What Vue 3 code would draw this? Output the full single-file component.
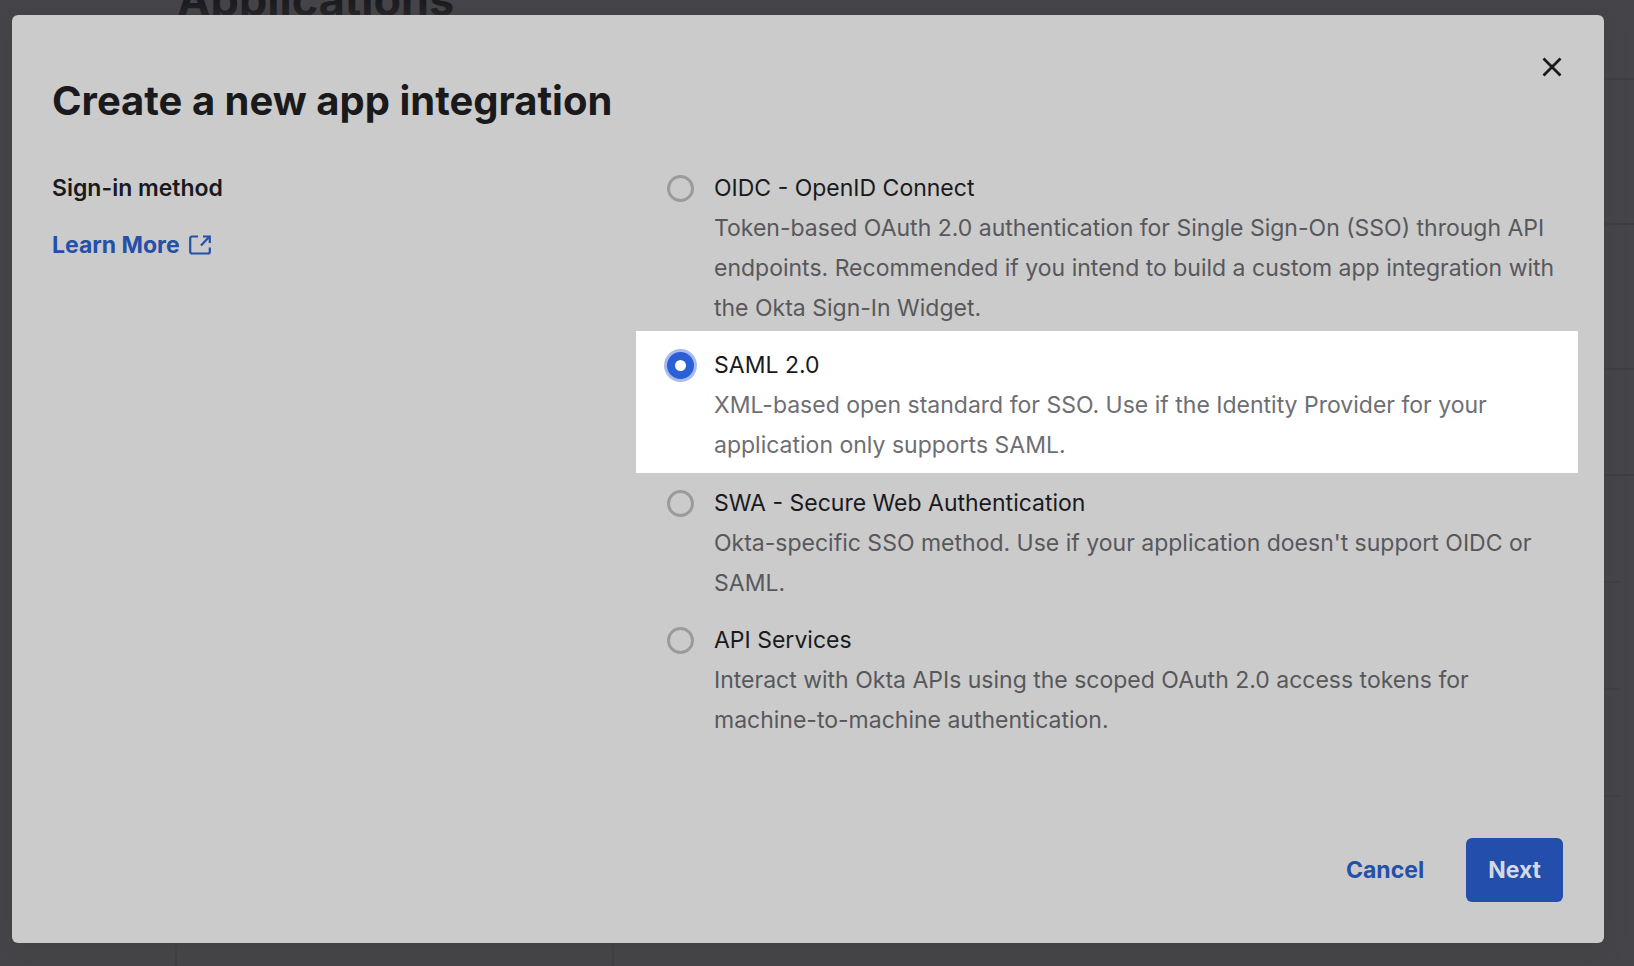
<script setup>
import { ref } from 'vue'

const selected = ref('saml')

const methods = [
  {
    id: 'oidc',
    title: 'OIDC - OpenID Connect',
    text: 'Token-based OAuth 2.0 authentication for Single Sign-On (SSO) through API endpoints. Recommended if you intend to build a custom app integration with the Okta Sign-In Widget.',
  },
  {
    id: 'saml',
    title: 'SAML 2.0',
    text: 'XML-based open standard for SSO. Use if the Identity Provider for your application only supports SAML.',
  },
  {
    id: 'swa',
    title: 'SWA - Secure Web Authentication',
    text: "Okta-specific SSO method. Use if your application doesn't support OIDC or SAML.",
  },
  {
    id: 'api',
    title: 'API Services',
    text: 'Interact with Okta APIs using the scoped OAuth 2.0 access tokens for machine-to-machine authentication.',
  },
]
</script>

<template>
  <div class="screen">
    <div class="page" aria-hidden="true">
      <div class="page-head"><p class="page-title">Applications</p></div>
      <div class="band"></div>
      <div class="band"></div>
      <div class="band short"></div>
      <div class="columns">
        <div class="side"></div>
        <div class="filters"></div>
        <div class="list">
          <div class="item"></div>
          <div class="item"></div>
          <div class="item"></div>
        </div>
      </div>
    </div>

    <div class="overlay">
      <section class="modal" role="dialog" aria-modal="true" aria-labelledby="dialog-title">
        <button class="close" type="button" aria-label="Close">
          <svg width="20" height="20" viewBox="0 0 20 20" fill="none" stroke="currentColor" stroke-width="2.8">
            <path d="M1.5 1.5 18.5 18.5M18.5 1.5 1.5 18.5" />
          </svg>
        </button>
        <h1 id="dialog-title">Create a new app integration</h1>

        <div class="body">
          <div class="intro">
            <h2 id="method-label">Sign-in method</h2>
            <a class="learn" href="#">
              Learn More
              <svg width="22" height="20" viewBox="0 0 22 20" fill="none" stroke="currentColor" stroke-width="2.2">
                <path d="M9 1.5H3A1.8 1.8 0 0 0 1.2 3.3V16.7A1.8 1.8 0 0 0 3 18.5H19A1.8 1.8 0 0 0 20.8 16.7V12.5" />
                <path d="M12 10.5 20 2" />
                <path d="M14 1.5H20.8V8" />
              </svg>
            </a>
          </div>

          <div class="options" role="radiogroup" aria-labelledby="method-label">
            <label
              v-for="m in methods"
              :key="m.id"
              class="option"
              :class="{ active: selected === m.id }"
            >
              <input v-model="selected" type="radio" name="method" :value="m.id" />
              <span class="copy">
                <span class="name">{{ m.title }}</span>
                <span class="text">{{ m.text }}</span>
              </span>
            </label>
          </div>
        </div>

        <footer class="actions">
          <button class="cancel" type="button">Cancel</button>
          <button class="next" type="button">Next</button>
        </footer>
      </section>
    </div>
  </div>
</template>

<style>
body {
  margin: 0;
  background: #454449;
}
</style>

<style scoped>
.screen {
  position: relative;
  min-height: 100vh;
  overflow: hidden;
  background: #454449;
  color: #1a1a1d;
  font-family: Inter, "Liberation Sans", sans-serif;
  font-size: 23px;
  line-height: 40px;
}

.page {
  position: absolute;
  inset: 0;
  display: flex;
  flex-direction: column;
}

.page-head {
  box-sizing: border-box;
  height: 80px;
  margin-left: 177px;
  border-bottom: 2px solid #3e3d42;
}

.page-title {
  margin: -30px 0 0;
  color: #1c1b20;
  font-size: 45px;
  font-weight: 700;
  line-height: 60px;
}

.band {
  box-sizing: border-box;
  height: 145px;
  margin-left: 177px;
  border-bottom: 2px solid #3e3d42;
}

.band.short {
  height: 106px;
}

.columns {
  display: grid;
  flex: 1;
  grid-template-columns: 177px 437px 1fr;
}

.side,
.filters {
  border-right: 2px solid #3f3e43;
}

.list {
  padding-right: 15px;
}

.item {
  box-sizing: border-box;
  height: 107px;
  border-bottom: 2px solid #3f3e42;
}

.overlay {
  position: relative;
  box-sizing: border-box;
  display: flex;
  min-height: 100vh;
  padding: 15px 30px 23px 12px;
}

.modal {
  position: relative;
  box-sizing: border-box;
  display: flex;
  flex: 1;
  flex-direction: column;
  padding: 60px 41px 41px 40px;
  border-radius: 6px;
  background: #cbcbcb;
  box-shadow: 0 4px 18px #424240;
}

.close {
  position: absolute;
  top: 36px;
  right: 36px;
  display: flex;
  padding: 6px;
  border: 0;
  background: none;
  color: #1a1a1d;
}

h1 {
  margin: 0;
  font-size: 40px;
  font-weight: 700;
  line-height: 52px;
}

.body {
  display: grid;
  grid-template-columns: 63fr 100fr;
  margin-top: 27px;
}

.intro {
  padding-top: 14px;
}

h2 {
  margin: 0;
  font-size: 23px;
  font-weight: 600;
  line-height: 40px;
}

.learn {
  display: inline-flex;
  align-items: center;
  gap: 9px;
  margin-top: 17px;
  color: #2450a8;
  font-weight: 700;
  text-decoration: none;
}

.options {
  margin-right: -15px;
}

.option {
  display: flex;
  gap: 20px;
  padding: 14px 20px 3px 31px;
}

.option.active {
  margin-bottom: -4px;
  padding-bottom: 8px;
  background: #fff;
}

input {
  box-sizing: border-box;
  flex: none;
  width: 27px;
  height: 27px;
  margin: 7px 0 0;
  border: 3px solid #9b9b9c;
  border-radius: 50%;
  appearance: none;
}

input:checked {
  border: 8px solid #2a5fd6;
  background: #fff;
  box-shadow: 0 0 0 3px #a9bbec;
}

.name,
.text {
  display: block;
}

.text {
  color: #58585c;
}

.active .text {
  color: #6e6e73;
}

.actions {
  display: flex;
  justify-content: flex-end;
  gap: 20px;
  margin-top: auto;
}

.actions button {
  height: 64px;
  padding: 0 22px;
  border: 0;
  border-radius: 6px;
  font: inherit;
  font-weight: 700;
}

.actions .cancel {
  background: none;
  color: #2450a8;
}

.actions .next {
  background: #234eac;
  color: #d3d8e2;
}
</style>
